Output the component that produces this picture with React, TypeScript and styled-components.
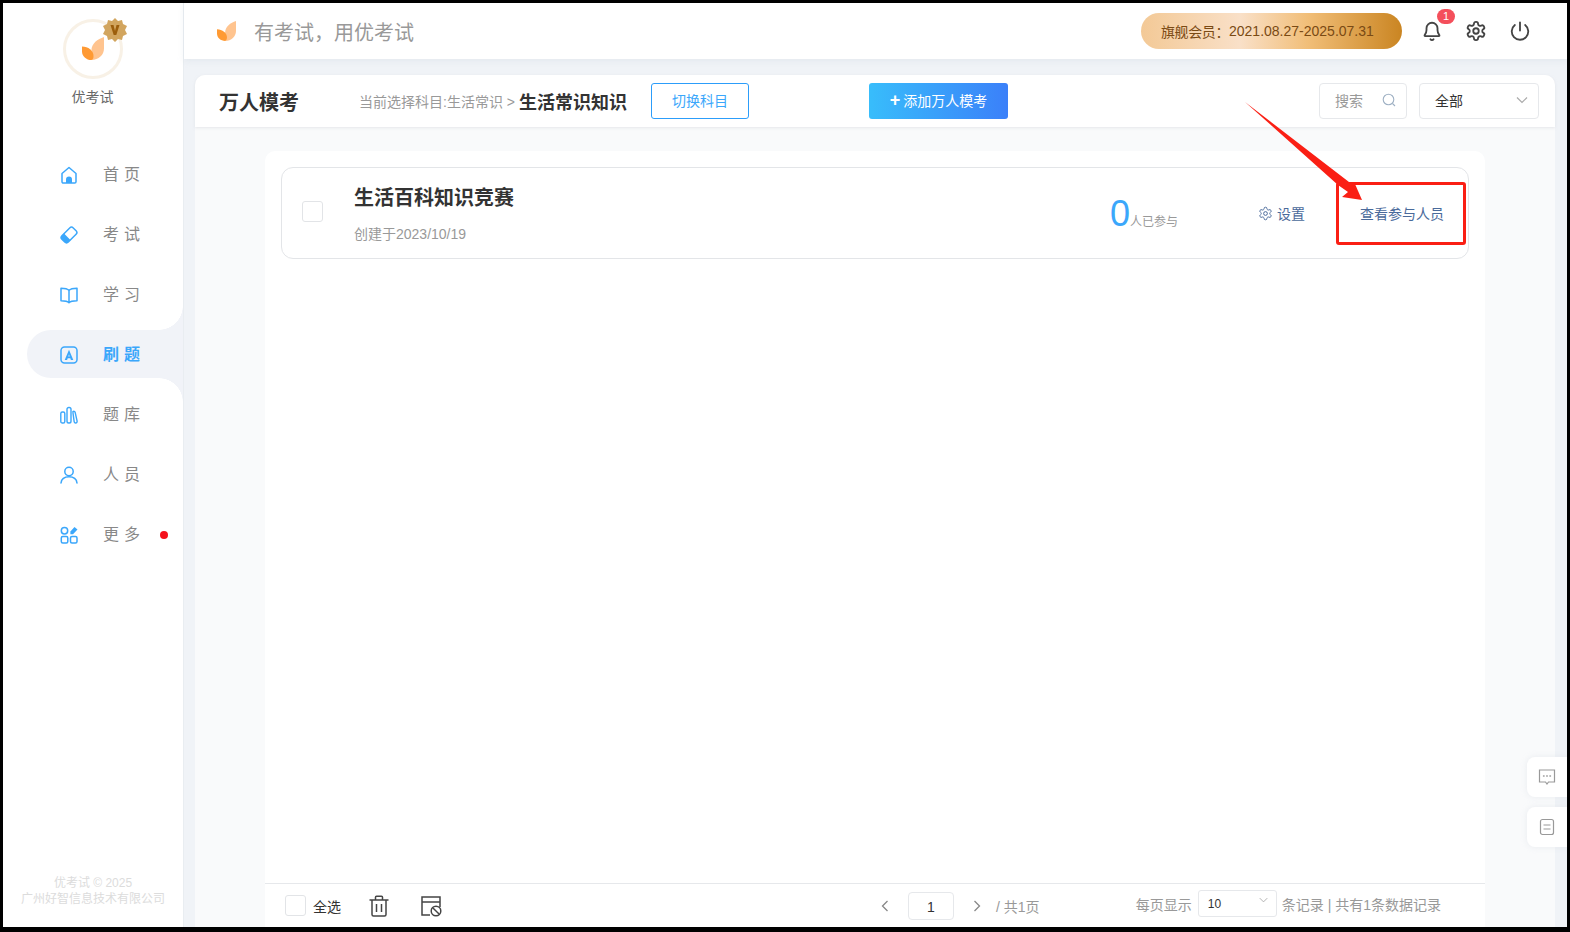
import React from "react";
import styled, { createGlobalStyle } from "styled-components";

const GlobalStyle = createGlobalStyle`
  html, body { margin: 0; padding: 0; background: #000; }
  * { box-sizing: border-box; }
  body { font-family: "Liberation Sans", "Noto Sans CJK SC", sans-serif; }
`;

const Frame = styled.div`
  position: relative;
  display: flex;
  width: 1570px;
  height: 932px;
  border-style: solid;
  border-color: #000;
  border-width: 3px 3px 5px 3px;
  background: #f0f3f7;
  overflow: hidden;
`;

/* sidebar */
const Sidebar = styled.aside`
  flex: 0 0 181px;
  display: flex;
  flex-direction: column;
  background: #fff;
  border-right: 1px solid #e9edf1;
`;
const Brand = styled.div`
  height: 142px;
  padding-top: 16px;
  display: flex;
  flex-direction: column;
  align-items: center;
  padding-right: 1px;
`;
const Avatar = styled.div`
  position: relative;
  width: 60px;
  height: 60px;
  border-radius: 50%;
  border: 3px solid #f8f1e6;
  display: flex;
  align-items: center;
  justify-content: center;
`;
const Medal = styled.svg`
  position: absolute;
  top: -4px;
  right: -7px;
`;
const BrandName = styled.div`
  margin-top: 9px;
  font-size: 14px;
  line-height: 18px;
  color: #666;
`;
const Nav = styled.nav`
  display: flex;
  flex-direction: column;
  padding-left: 24px;
`;
const NavItem = styled.div<{ $active?: boolean }>`
  position: relative;
  height: ${(p) => (p.$active ? "48px" : "60px")};
  margin: ${(p) => (p.$active ? "5px 0 7px" : "0")};
  display: flex;
  align-items: center;
  padding-left: 33px;
  padding-top: ${(p) => (p.$active ? "2px" : "0")};
  background: ${(p) => (p.$active ? "#f1f3f8" : "transparent")};
  border-radius: 24px 0 0 24px;
  color: ${(p) => (p.$active ? "#3ba7fb" : "#888")};
  font-weight: ${(p) => (p.$active ? 700 : 400)};
  ${(p) =>
    p.$active &&
    `
    &::before, &::after {
      content: "";
      position: absolute;
      right: 0;
      width: 24px;
      height: 24px;
    }
    &::before {
      top: -24px;
      background: radial-gradient(circle at 0 0, transparent 23.5px, #f1f3f8 24px);
    }
    &::after {
      bottom: -24px;
      background: radial-gradient(circle at 0 100%, transparent 23.5px, #f1f3f8 24px);
    }
  `}
`;
const NavIcon = styled.svg`
  flex: 0 0 18px;
  width: 18px;
  height: 18px;
  margin-right: 25px;
  color: #3ba7fb;
`;
const NavLabel = styled.span`
  font-size: 16px;
  letter-spacing: 5px;
  line-height: 20px;
  white-space: nowrap;
`;
const RedDot = styled.span`
  width: 8px;
  height: 8px;
  margin-left: 15px;
  border-radius: 50%;
  background: #f5121d;
`;
const Copyright = styled.div`
  margin-top: auto;
  padding-bottom: 20px;
  text-align: center;
  font-size: 12px;
  line-height: 16px;
  color: #dcdcdc;
`;

/* main */
const Main = styled.div`
  flex: 1;
  min-width: 0;
  display: flex;
  flex-direction: column;
`;
const Header = styled.header`
  flex: 0 0 56px;
  display: flex;
  align-items: center;
  padding: 0 36px 0 33px;
  background: #fff;
  box-shadow: 0 2px 6px rgba(200, 208, 218, 0.3);
`;
const Slogan = styled.div`
  margin-left: 18px;
  font-size: 20px;
  color: #999;
`;
const Vip = styled.div`
  margin-left: auto;
  width: 261px;
  height: 36px;
  padding-left: 20px;
  border-radius: 18px;
  display: flex;
  align-items: center;
  font-size: 14px;
  color: #7a4a14;
  background: linear-gradient(90deg, #f3c996 0%, #f9e0c8 38%, #f1be78 64%, #ca8522 100%);
`;
const VipLabel = styled.span`
  letter-spacing: -0.4px;
`;
const HeaderIcons = styled.div`
  display: flex;
  align-items: center;
  gap: 22px;
  margin-left: 19px;
`;
const IconWrap = styled.div`
  position: relative;
  display: flex;
  color: #444;
`;
const Badge = styled.span`
  position: absolute;
  top: -11px;
  left: 16px;
  width: 18px;
  height: 15px;
  border-radius: 8px;
  background: #f44f5b;
  color: #fff;
  font-size: 11px;
  line-height: 15px;
  text-align: center;
`;

const Content = styled.div`
  flex: 1;
  min-height: 0;
  display: flex;
  padding: 16px 12px 0 11px;
`;
const Panel = styled.section`
  flex: 1;
  min-width: 0;
  display: flex;
  flex-direction: column;
  border-radius: 10px 10px 0 0;
  background: #f9fafb;
`;
const PageBar = styled.div`
  flex: 0 0 52px;
  display: flex;
  align-items: center;
  padding: 0 16px 0 24px;
  border-radius: 10px 10px 0 0;
  background: #fff;
  box-shadow: 0 1px 3px rgba(210, 214, 220, 0.5);
`;
const PageTitle = styled.h1`
  margin: 0;
  width: 140px;
  font-size: 20px;
  font-weight: 700;
  color: #333;
`;
const Crumb = styled.span`
  font-size: 14px;
  color: #999;
  white-space: nowrap;
`;
const CrumbCurrent = styled.strong`
  margin-left: 4px;
  font-size: 18px;
  color: #333;
  white-space: nowrap;
`;
const OutlineButton = styled.button`
  width: 98px;
  height: 36px;
  margin-left: 24px;
  padding: 0 0 2px;
  background: #fff;
  border: 1px solid #2c9dfa;
  border-radius: 3px;
  font: inherit;
  font-size: 14px;
  color: #3ba7fb;
`;
const AddButton = styled.button`
  width: 139px;
  height: 36px;
  margin-left: 120px;
  padding: 0 0 2px;
  border: 0;
  border-radius: 3px;
  background: linear-gradient(90deg, #38bdfb, #3b80f9);
  font: inherit;
  font-size: 14px;
  color: #fff;
`;
const Plus = styled.span`
  font-size: 18px;
  font-weight: 700;
  line-height: 14px;
  margin-right: 3px;
`;
const SearchBox = styled.div`
  width: 88px;
  height: 36px;
  margin-left: auto;
  padding: 0 10px 2px 15px;
  display: flex;
  align-items: center;
  justify-content: space-between;
  border: 1px solid #e6e8eb;
  border-radius: 4px;
  font-size: 14px;
  color: #999;
`;
const FilterBox = styled.div`
  width: 120px;
  height: 36px;
  margin-left: 12px;
  padding: 0 10px 2px 15px;
  display: flex;
  align-items: center;
  justify-content: space-between;
  border: 1px solid #e6e8eb;
  border-radius: 4px;
  font-size: 14px;
  color: #333;
`;

const Sheet = styled.div`
  flex: 1;
  min-height: 0;
  margin: 24px 70px 0 70px;
  display: flex;
  flex-direction: column;
  background: #fff;
  border-radius: 10px 10px 0 0;
`;
const List = styled.div`
  flex: 1;
  padding: 16px 16px 0;
`;
const ExamCard = styled.article`
  position: relative;
  height: 92px;
  display: flex;
  align-items: center;
  padding-left: 20px;
  border: 1px solid #e3e5e8;
  border-radius: 12px;
`;
const CheckBox = styled.span`
  flex: 0 0 21px;
  width: 21px;
  height: 21px;
  border: 1px solid #e2e4e7;
  border-radius: 3px;
  background: #fff;
`;
const CardCheck = styled(CheckBox)`
  margin-top: -4px;
`;
const ExamInfo = styled.div`
  margin-left: 31px;
  align-self: flex-start;
  padding-top: 15px;
`;
const ExamTitle = styled.h2`
  margin: 0;
  font-size: 20px;
  line-height: 30px;
  font-weight: 700;
  color: #333;
`;
const ExamDate = styled.div`
  margin-top: 11px;
  font-size: 14px;
  line-height: 20px;
  color: #999;
`;
const Joined = styled.div`
  margin-left: auto;
  margin-top: 1px;
  display: flex;
  align-items: baseline;
  width: 148px;
`;
const JoinedCount = styled.span`
  font-size: 36px;
  line-height: 40px;
  font-weight: 400;
  color: #3ba7fb;
`;
const JoinedLabel = styled.span`
  font-size: 12px;
  color: #999;
`;
const LinkAction = styled.span`
  display: flex;
  align-items: center;
  gap: 4px;
  font-size: 14px;
  color: #4a6a9b;
  white-space: nowrap;
`;
const ViewAction = styled(LinkAction)`
  margin-left: 55px;
  margin-right: 24px;
`;
const Annotation = styled.div`
  position: absolute;
  left: 1054px;
  top: 14px;
  width: 130px;
  height: 63px;
  border: 3px solid #fa1f14;
  border-radius: 3px;
`;
const ArrowLayer = styled.svg`
  position: absolute;
  left: 1237px;
  top: 96px;
  pointer-events: none;
`;

const Footer = styled.footer`
  flex: 0 0 44px;
  display: flex;
  align-items: center;
  padding: 0 44px 0 20px;
  border-top: 1px solid #e6e8eb;
  font-size: 14px;
  color: #999;
`;
const SelectAll = styled.span`
  margin-left: 7px;
  color: #333;
`;
const ToolIcon = styled.svg<{ $gap: number }>`
  margin-left: ${(p) => p.$gap}px;
  color: #444;
`;
const Pager = styled.div`
  display: flex;
  align-items: center;
  margin-left: 439px;
`;
const PageInput = styled.div`
  width: 46px;
  height: 28px;
  margin: 0 19px;
  border: 1px solid #e6e8eb;
  border-radius: 4px;
  text-align: center;
  line-height: 28px;
  font-size: 14px;
  color: #333;
`;
const PageTotal = styled.span`
  margin-left: 15px;
`;
const PageSize = styled.div`
  margin-left: auto;
  display: flex;
  align-items: center;
  margin-top: -4px;
`;
const SizeSelect = styled.div`
  width: 79px;
  height: 27px;
  margin: 0 5px 0 6px;
  padding: 0 8px 0 9px;
  display: flex;
  align-items: center;
  justify-content: space-between;
  border: 1px solid #e6e8eb;
  border-radius: 3px;
  font-size: 12px;
  color: #333;
  svg {
    align-self: flex-start;
    margin-top: 6px;
  }
`;

const SideTab = styled.div<{ $top: number }>`
  position: absolute;
  top: ${(p) => p.$top}px;
  right: 0;
  width: 40px;
  height: 40px;
  display: flex;
  align-items: center;
  justify-content: center;
  border-radius: 8px 0 0 8px;
  background: #fff;
  box-shadow: 0 0 6px rgba(200, 205, 215, 0.3);
  color: #999;
`;

const LeafLogo = ({ size }: { size: number }) => (
  <svg width={size} height={size * 1.05} viewBox="0 0 21 22">
    <path d="M21 0V11C21 17 16 22 9 22C10 18 9 15 9 13C9 6 15 2 21 0Z" fill="#ffc48f" />
    <path d="M0 9C6 9 11 13 11 18C11 20 10.500 21 9 22C4 22 0 18 0 14Z" fill="#ff9a33" />
  </svg>
);

const icons = {
  home: (
    <>
      <path d="M2 7.500 9 1.500l7 6v8.200a1.300 1.300 0 0 1-1.300 1.300H3.300A1.300 1.300 0 0 1 2 15.700z" fill="none" stroke="currentColor" strokeWidth="1.500" strokeLinejoin="round" />
      <path d="M6 17v-3.500a3 3 0 0 1 6 0V17z" fill="currentColor" />
    </>
  ),
  eraser: (
    <g transform="rotate(-45 9 9)">
      <rect x="1" y="4.500" width="16" height="9" rx="2.500" fill="none" stroke="currentColor" strokeWidth="1.500" />
      <path d="M3.500 4.500H6.500V13.500H3.500A2.500 2.500 0 0 1 1 11V7A2.500 2.500 0 0 1 3.500 4.500Z" fill="currentColor" />
    </g>
  ),
  book: (
    <>
      <path d="M9 4.500C7.500 2.800 5 2.300 1 2.300v12.500c4 0 6.500.3 8 2 1.500-1.700 4-2 8-2V2.300c-4 0-6.500.5-8 2.200zM9 4.500v12" fill="none" stroke="currentColor" strokeWidth="1.500" strokeLinejoin="round" />
    </>
  ),
  quiz: (
    <>
      <rect x="1" y="1" width="16" height="16" rx="3.500" fill="none" stroke="currentColor" strokeWidth="1.500" />
      <path d="M9 3.800 13.300 14h-2.400l-.6-1.700H7.700L7.100 14H4.700zM8.300 10.500h1.400L9 8.300z" fill="currentColor" fillRule="evenodd" />
    </>
  ),
  bank: (
    <>
      <rect x=".8" y="6" width="4" height="11" rx="1.600" fill="none" stroke="currentColor" strokeWidth="1.400" />
      <rect x="7" y="1.500" width="4" height="15.500" rx="1.800" fill="none" stroke="currentColor" strokeWidth="1.400" />
      <path d="M13 5.500c.8-.5 1.800-.2 2.100.7l2 9c.1 1-.4 1.600-1.200 1.800-.9.100-1.500-.3-1.700-1.200L13 7z" fill="none" stroke="currentColor" strokeWidth="1.400" />
    </>
  ),
  user: (
    <>
      <circle cx="9" cy="5.500" r="4.200" fill="none" stroke="currentColor" strokeWidth="1.500" />
      <path d="M1 17c.5-4 3.800-6.200 8-6.200s7.500 2.200 8 6.200" fill="none" stroke="currentColor" strokeWidth="1.500" strokeLinecap="round" />
    </>
  ),
  more: (
    <>
      <circle cx="4.500" cy="4.800" r="3.200" fill="none" stroke="currentColor" strokeWidth="1.500" />
      <rect x="1.300" y="10.500" width="6.500" height="6.500" rx="1.500" fill="none" stroke="currentColor" strokeWidth="1.500" />
      <rect x="10.500" y="10.500" width="6.500" height="6.500" rx="1.500" fill="none" stroke="currentColor" strokeWidth="1.500" />
      <path d="M14.500 1 17.500 3.500 13 8.300H10.400V5.500z" fill="currentColor" />
    </>
  ),
};

const GearPath = () => (
  <path d="M12.220 2h-.44a2 2 0 0 0-2 2v.18a2 2 0 0 1-1 1.730l-.43.250a2 2 0 0 1-2 0l-.150-.080a2 2 0 0 0-2.730.730l-.220.380a2 2 0 0 0 .730 2.730l.150.100a2 2 0 0 1 1 1.720v.510a2 2 0 0 1-1 1.740l-.150.090a2 2 0 0 0-.730 2.730l.220.380a2 2 0 0 0 2.730.730l.150-.080a2 2 0 0 1 2 0l.430.250a2 2 0 0 1 1 1.730V20a2 2 0 0 0 2 2h.44a2 2 0 0 0 2-2v-.18a2 2 0 0 1 1-1.730l.430-.250a2 2 0 0 1 2 0l.150.080a2 2 0 0 0 2.730-.730l.220-.390a2 2 0 0 0-.730-2.730l-.150-.080a2 2 0 0 1-1-1.740v-.500a2 2 0 0 1 1-1.740l.150-.090a2 2 0 0 0 .730-2.730l-.220-.380a2 2 0 0 0-2.730-.730l-.150.080a2 2 0 0 1-2 0l-.430-.250a2 2 0 0 1-1-1.730V4a2 2 0 0 0-2-2zM15 12a3 3 0 1 1-6 0 3 3 0 0 1 6 0z" />
);

const navItems: { key: keyof typeof icons; label: string; active?: boolean; dot?: boolean }[] = [
  { key: "home", label: "首页" },
  { key: "eraser", label: "考试" },
  { key: "book", label: "学习" },
  { key: "quiz", label: "刷题", active: true },
  { key: "bank", label: "题库" },
  { key: "user", label: "人员" },
  { key: "more", label: "更多", dot: true },
];

const Chevron = ({ size = 12 }: { size?: number }) => (
  <svg width={size} height={(size * 2) / 3} viewBox="0 0 12 8" fill="none" stroke="#aaa" strokeWidth="1.200">
    <path d="M1 1.500 6 6.500l5-5" />
  </svg>
);

const App = () => (
  <>
    <GlobalStyle />
    <Frame>
      <Sidebar>
        <Brand>
          <Avatar>
            <LeafLogo size={22} />
            <Medal width="24" height="24" viewBox="0 0 24 24">
              <path
                d="M12 0l3 3 4-1 1 4 4 2-2 4 2 4-4 2-1 4-4-1-3 3-3-3-4 1-1-4-4-2 2-4-2-4 4-2 1-4 4 1z"
                fill="#d2a55e"
              />
              <path d="M7.500 7h3l1.500 6 1.500-6h3l-3.200 10h-2.600z" fill="#9c5e0c" />
            </Medal>
          </Avatar>
          <BrandName>优考试</BrandName>
        </Brand>
        <Nav>
          {navItems.map((item) => (
            <NavItem key={item.key} $active={item.active}>
              <NavIcon viewBox="0 0 18 18">{icons[item.key]}</NavIcon>
              <NavLabel>{item.label}</NavLabel>
              {item.dot && <RedDot />}
            </NavItem>
          ))}
        </Nav>
        <Copyright>
          优考试 © 2025
          <br />
          广州好智信息技术有限公司
        </Copyright>
      </Sidebar>
      <Main>
        <Header>
          <LeafLogo size={19} />
          <Slogan>有考试，用优考试</Slogan>
          <Vip>
            <VipLabel>旗舰会员：</VipLabel>2021.08.27-2025.07.31
          </Vip>
          <HeaderIcons>
            <IconWrap>
              <svg width="22" height="22" viewBox="0 0 24 24" fill="none" stroke="currentColor" strokeWidth="2" strokeLinecap="round" strokeLinejoin="round">
                <path d="M10.300 21a2 2 0 0 0 3.400 0M4 16.500c1.300-1.400 2-2.500 2-5.500V9a6 6 0 0 1 12 0v2c0 3 .7 4.100 2 5.500.3.400 0 1-.5 1h-15c-.5 0-.8-.6-.5-1z" />
              </svg>
              <Badge>1</Badge>
            </IconWrap>
            <IconWrap>
              <svg width="22" height="22" viewBox="0 0 24 24" fill="none" stroke="currentColor" strokeWidth="2" strokeLinecap="round" strokeLinejoin="round">
                <GearPath />
              </svg>
            </IconWrap>
            <IconWrap>
              <svg width="22" height="22" viewBox="0 0 24 24" fill="none" stroke="currentColor" strokeWidth="2" strokeLinecap="round">
                <path d="M12 2.500v9M6.400 5.500a9 9 0 1 0 11.200 0" />
              </svg>
            </IconWrap>
          </HeaderIcons>
        </Header>
        <Content>
          <Panel>
            <PageBar>
              <PageTitle>万人模考</PageTitle>
              <Crumb>当前选择科目:生活常识 &gt;</Crumb>
              <CrumbCurrent>生活常识知识</CrumbCurrent>
              <OutlineButton>切换科目</OutlineButton>
              <AddButton>
                <Plus>+</Plus>添加万人模考
              </AddButton>
              <SearchBox>
                搜索
                <svg width="14" height="14" viewBox="0 0 14 14" fill="none" stroke="#9fb1c4" strokeWidth="1.100">
                  <circle cx="6.500" cy="6.500" r="5.300" />
                  <path d="M10.500 10.500 13 13" />
                </svg>
              </SearchBox>
              <FilterBox>
                全部
                <Chevron />
              </FilterBox>
            </PageBar>
            <Sheet>
              <List>
                <ExamCard>
                  <CardCheck />
                  <ExamInfo>
                    <ExamTitle>生活百科知识竞赛</ExamTitle>
                    <ExamDate>创建于2023/10/19</ExamDate>
                  </ExamInfo>
                  <Joined>
                    <JoinedCount>0</JoinedCount>
                    <JoinedLabel>人已参与</JoinedLabel>
                  </Joined>
                  <LinkAction>
                    <svg width="15" height="15" viewBox="0 0 24 24" fill="none" stroke="currentColor" strokeWidth="1.600">
                      <GearPath />
                    </svg>
                    设置
                  </LinkAction>
                  <ViewAction>查看参与人员</ViewAction>
                  <Annotation />
                </ExamCard>
              </List>
              <Footer>
                <CheckBox />
                <SelectAll>全选</SelectAll>
                <ToolIcon $gap={27} width="22" height="24" viewBox="0 0 22 24" fill="none" stroke="currentColor" strokeWidth="1.500">
                  <path d="M1.500 6h19M7.500 6V3.200c0-.6.400-1 1-1h5c.6 0 1 .4 1 1V6M4 6v14.500c0 1 .6 1.500 1.500 1.500h11c.9 0 1.500-.5 1.500-1.500V6M8.500 10v8M13.500 10v8" />
                </ToolIcon>
                <ToolIcon $gap={30} width="22" height="22" viewBox="0 0 22 22" fill="none" stroke="currentColor" strokeWidth="1.500">
                  <path d="M10 20H2V2h18v10M2 7h18" />
                  <circle cx="16" cy="16" r="4.800" />
                  <path d="M12.700 12.700l6.600 6.600" />
                </ToolIcon>
                <Pager>
                  <svg width="8" height="12" viewBox="0 0 8 12" fill="none" stroke="#888" strokeWidth="1.300">
                    <path d="M6.500 1 1.500 6l5 5" />
                  </svg>
                  <PageInput>1</PageInput>
                  <svg width="8" height="12" viewBox="0 0 8 12" fill="none" stroke="#888" strokeWidth="1.300">
                    <path d="M1.500 1l5 5-5 5" />
                  </svg>
                  <PageTotal>/ 共1页</PageTotal>
                </Pager>
                <PageSize>
                  每页显示
                  <SizeSelect>
                    10
                    <Chevron size={9} />
                  </SizeSelect>
                  条记录 | 共有1条数据记录
                </PageSize>
              </Footer>
            </Sheet>
          </Panel>
        </Content>
      </Main>
      <ArrowLayer width="130" height="110" viewBox="0 0 130 110">
        <path d="M5 3 109 83 115 85 122 101 102 98 108 93 98 86z" fill="#fa1f14" />
      </ArrowLayer>
      <SideTab $top={754}>
        <svg width="18" height="18" viewBox="0 0 18 18" fill="none" stroke="currentColor" strokeWidth="1.200" strokeLinecap="round">
          <path d="M1.500 2h15v12h-6L9 16l-1.500-2h-6z" />
          <path d="M5.500 8h.6M8.700 8h.6M11.900 8h.6" strokeWidth="1.400" />
        </svg>
      </SideTab>
      <SideTab $top={804}>
        <svg width="16" height="18" viewBox="0 0 16 18" fill="none" stroke="currentColor" strokeWidth="1.200">
          <rect x="1.500" y="1.500" width="13" height="15" rx="2" />
          <path d="M4.500 7h7M4.500 11h7" />
        </svg>
      </SideTab>
    </Frame>
  </>
);

export default App;
